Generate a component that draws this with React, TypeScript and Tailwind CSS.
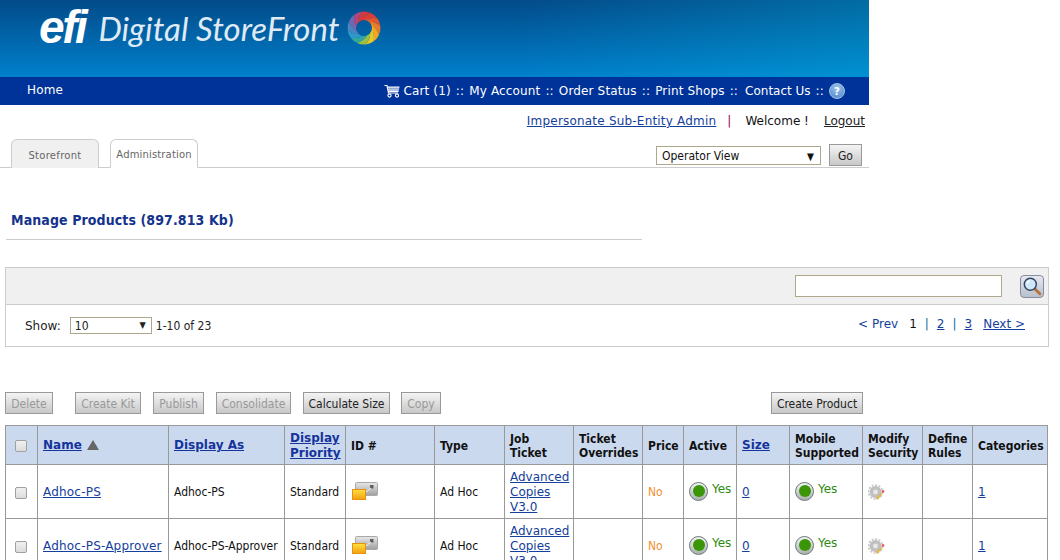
import React from "react";

const FONT = "font-['DejaVu_Sans',Verdana,sans-serif]";
const COND = "font-['DejaVu_Sans_Condensed','DejaVu_Sans',sans-serif]";

function Cart() {
  return (
    <svg width="16" height="14" viewBox="0 0 16 14" className="mr-[-2px]">
      <path d="M0.5 1.5H3L4.5 9H14" fill="none" stroke="#fff" strokeWidth="1.2" />
      <path d="M3.5 2.5H15.5L14.5 8H4.5Z" fill="#fff" />
      <path d="M4 4.2H15M4.5 6H15" stroke="#003399" strokeWidth="0.6" />
      <circle cx="5.5" cy="11.5" r="1.6" fill="none" stroke="#fff" strokeWidth="1.1" />
      <circle cx="13" cy="11.5" r="1.6" fill="none" stroke="#fff" strokeWidth="1.1" />
    </svg>
  );
}

function Ring() {
  const segs: [string, number][] = [
    ["#b04880", -90], ["#d23a40", -60], ["#dc3c34", -30], ["#e2542e", 0], ["#ea7a28", 30], ["#f0a822", 60],
    ["#e8c828", 90], ["#9cc040", 120], ["#30a8a0", 150], ["#3098c8", 180], ["#4c84c0", 210], ["#7068b0", 240],
  ];
  return (
    <svg width="34" height="34" viewBox="-17 -17 34 34" className="ml-[8px]">
      {segs.map(([c, a]) => (
        <path
          key={a}
          d="M0 -8Q8 -11 13.5 -9.46A16.5 16.5 0 0 1 16.4 -1.44Q12 -6 5.14 -6.13A8 8 0 0 0 0 -8Z"
          fill={c}
          transform={`rotate(${a})`}
        />
      ))}
    </svg>
  );
}

function Help() {
  return (
    <span className="inline-flex h-[16px] w-[16px] items-center justify-center rounded-full border border-[#a8c4e8] bg-[radial-gradient(circle_at_50%_30%,#9cc4ec,#4a84c8)] text-[10px] font-bold text-white">?</span>
  );
}

function Magnifier() {
  return (
    <div className="flex h-[23px] w-[24px] items-center justify-center rounded-[4px] border border-[#8a8aa0] bg-[linear-gradient(#e4e8f0,#b8c0cc)]">
      <svg width="20" height="20" viewBox="0 0 18 18">
        <path d="M10.5 10.5L16 16" stroke="#b8723c" strokeWidth="2.6" strokeLinecap="round" />
        <circle cx="7.5" cy="7.5" r="5.4" fill="#cfe6fb" stroke="#34465c" strokeWidth="1.3" />
        <path d="M4.5 7A3 3 0 0 1 7 4.5" fill="none" stroke="#fff" strokeWidth="1.2" />
      </svg>
    </div>
  );
}

function Folder({ id }: { id: string }) {
  return (
    <svg width="26" height="18" viewBox="0 0 26 18" className="mb-[3px]">
      <defs>
        <linearGradient id={"gr" + id} x1="0" y1="0" x2="0" y2="1"><stop offset="0" stopColor="#e8e8e8" /><stop offset="1" stopColor="#a0a0a0" /></linearGradient>
        <linearGradient id={"ye" + id} x1="0" y1="0" x2="0" y2="1"><stop offset="0" stopColor="#ffe040" /><stop offset="1" stopColor="#f0a010" /></linearGradient>
      </defs>
      <rect x="3.5" y="0.5" width="22" height="13" rx="1" fill={`url(#gr${id})`} stroke="#a8a8a8" />
      <rect x="18" y="3" width="3.5" height="3.5" fill="#606060" />
      <path d="M14 10L19 6" stroke="#f0f0f0" strokeWidth="1" />
      <rect x="0.5" y="7.5" width="13" height="10" fill={`url(#ye${id})`} stroke="#e89010" />
    </svg>
  );
}

function Dot() {
  return (
    <span className="flex h-[19px] w-[19px] shrink-0 items-center justify-center rounded-full border border-[#707878] bg-[linear-gradient(#f0f4f4,#a8b0b0)]">
      <span className="h-[12px] w-[12px] rounded-full bg-[#3a9606]" />
    </span>
  );
}

function YesCell() {
  return (
    <div className="mb-[3px] flex items-start gap-[4px] text-[#2f8a10]">
      <Dot />
      <span className={"leading-[14px]"}>Yes</span>
    </div>
  );
}

function Gear() {
  return (
    <svg width="17" height="17" viewBox="0 0 17 17" className="mb-[1px]">
      <circle cx="7.5" cy="8" r="6" fill="#c0c0c0" />
      <circle cx="7.5" cy="8" r="7" fill="none" stroke="#c4c4c4" strokeWidth="1.6" strokeDasharray="2 1.6" />
      <circle cx="7.5" cy="8" r="2.4" fill="#e8e8e8" />
      <path d="M8.5 15L13.5 10" stroke="#e0b840" strokeWidth="2" />
      <circle cx="15" cy="7.5" r="1.4" fill="#e86060" />
    </svg>
  );
}

function Check() {
  return <span className="block h-[12px] w-[12px] rounded-[2px] border border-[#a0a0a0] bg-[linear-gradient(#f0f0f0,#dcdcdc)]" />;
}

function Btn({ children, off, className = "" }: { children: React.ReactNode; off?: boolean; className?: string }) {
  return (
    <span className={`flex h-[22px] items-center justify-center border border-[#999] bg-[linear-gradient(#f4f4f4,#c8c8c8)] pt-[2px] text-[12px] ${COND} ${off ? "text-[#999]" : "text-[#222]"} ${className}`}>
      {children}
    </span>
  );
}

const L = "text-[#14409c] underline";
const H = `border border-[#999] px-[5px] pt-[2px] text-left align-middle text-[12px] font-bold leading-[14px] text-[#111] ${COND}`;
const HL = `text-[12px] text-[#14339c] underline ${FONT}`;
const C = "border border-[#999] px-[5px] pt-[2px] align-middle text-[12px] leading-[15px] text-[#111]";

function Row({ name, id }: { name: string; id: string }) {
  return (
    <tr className="h-[54px]">
      <td className={C + " pl-[9px]"}><Check /></td>
      <td className={C}><a className={L + " tracking-[0.2px]"}>{name}</a></td>
      <td className={C + " " + COND}>{name}</td>
      <td className={C + " " + COND}>Standard</td>
      <td className={C + " pl-[6px]"}><Folder id={id} /></td>
      <td className={C + " " + COND}>Ad Hoc</td>
      <td className={C}><a className={L}>Advanced Copies V3.0</a></td>
      <td className={C}></td>
      <td className={C + " text-[#f09030] " + COND}>No</td>
      <td className={C}><YesCell /></td>
      <td className={C}><a className={L}>0</a></td>
      <td className={C}><YesCell /></td>
      <td className={C}><Gear /></td>
      <td className={C}></td>
      <td className={C}><a className={L}>1</a></td>
    </tr>
  );
}

const widths = [32, 131, 116, 61, 89, 70, 69, 69, 41, 53, 53, 73, 60, 50, 75];

export default function App() {
  return (
    <div className={`h-[560px] w-[1060px] overflow-hidden bg-white ${FONT}`}>
      <div className="w-[869px]">
        <div className="flex h-[77px] items-start bg-[linear-gradient(90deg,rgba(0,40,130,0)_0%,rgba(0,0,0,0)_60%,rgba(0,190,230,0.28)_100%),linear-gradient(#034b89,#0080cc)] pl-[39px] pt-[11px]">
          <span className="font-['Liberation_Sans',sans-serif] text-[46px] font-bold italic leading-[32px] tracking-[-2.4px] text-white">efi</span>
          <span className="-mt-[1px] ml-[13px] font-['Lato',sans-serif] text-[33px] italic leading-[36px] text-[#dfeaf5]">Digital StoreFront</span>
          <Ring />
        </div>
        <div className="flex h-[28px] items-center justify-between bg-[#003399] pl-[27px] pr-[24px] text-[12px] font-medium tracking-[0.15px] text-white">
          <span className="pb-[2px]">Home</span>
          <div className="flex items-center gap-[5px]">
            <Cart />
            <span>Cart (1)</span><span>::</span><span>My Account</span><span>::</span><span>Order Status</span><span>::</span>
            <span>Print Shops</span><span>::</span><span className="ml-[2px] tracking-normal">Contact Us</span><span>::</span><Help />
          </div>
        </div>
        <div className="relative h-[63px] border-b border-[#ccc]">
          <div className="flex justify-end gap-[14px] pr-[4px] pt-[9px] text-[12px] leading-[15px]">
            <a className={L + " tracking-[0.2px]"}>Impersonate Sub-Entity Admin</a>
            <span className="-ml-[3px] text-[#900050]">|</span>
            <span className="text-[#111]">Welcome !</span>
            <a className="ml-[1px] text-[#222] underline">Logout</a>
          </div>
          <div className="absolute bottom-[-1px] left-[11px] flex gap-[11px] text-[10px] text-[#666]">
            <span className="flex h-[29px] w-[88px] items-center justify-center rounded-t-[6px] border border-b-0 border-[#ccc] bg-[#f0f0f0] pt-[2px] tracking-[0.3px]">Storefront</span>
            <span className="flex h-[29px] w-[88px] items-center justify-center rounded-t-[6px] border border-[#ccc] border-b-white bg-white pt-[2px] tracking-[0.15px]">Administration</span>
          </div>
          <div className="absolute bottom-[1px] right-[7px] flex items-center gap-[8px]">
            <span className={`flex h-[19px] w-[165px] items-center justify-between border border-[#aea78c] pl-[5px] pr-[6px] pt-[2px] text-[12px] text-[#111] ${COND}`}>
              Operator View<span className="text-[10px]">▼</span>
            </span>
            <Btn className="w-[33px]">Go</Btn>
          </div>
        </div>
      </div>

      <div className={`ml-[6px] mt-[43px] w-[636px] border-b border-[#ccc] pb-[9px] pl-[5px] text-[14px] font-bold leading-[19px] tracking-[0.1px] text-[#14338c] ${COND}`}>
        Manage Products (897.813 Kb)
      </div>

      <div className="ml-[5px] mt-[27px] w-[1044px]">
        <div className="flex h-[38px] items-center justify-end border border-[#ccc] bg-[#f0f0f0] pr-[4px]">
          <span className="mr-[18px] h-[22px] w-[207px] border border-[#aea78c] bg-white" />
          <Magnifier />
        </div>
        <div className="flex h-[42px] items-center justify-between border border-t-0 border-[#ccc] pl-[19px] pr-[23px] text-[12px] text-[#222]">
          <div className="flex items-center">
            <span>Show:</span>
            <span className={`ml-[9px] flex h-[17px] w-[82px] items-center justify-between border border-[#aea78c] pl-[4px] pr-[5px] ${COND}`}>10<span className="text-[9px]">▼</span></span>
            <span className={`ml-[4px] ${COND}`}>1-10 of 23</span>
          </div>
          <div className="flex items-center gap-[8px] pb-[4px] text-[#14409c]">
            <span>&lt; Prev</span>
            <span className="ml-[3px] text-[#111]">1</span>
            <span className="text-[#0a6aa8]">|</span><a className="underline">2</a><span className="text-[#0a6aa8]">|</span><a className="underline">3</a>
            <a className="ml-[3px] underline">Next &gt;</a>
          </div>
        </div>

        <div className="mt-[45px] flex w-[858px] gap-[12px]">
          <Btn off className="w-[48px]">Delete</Btn>
          <Btn off className="ml-[10px] w-[66px]">Create Kit</Btn>
          <Btn off className="w-[51px]">Publish</Btn>
          <Btn off className="w-[75px]">Consolidate</Btn>
          <Btn className="w-[87px]">Calculate Size</Btn>
          <Btn off className="-ml-[1px] w-[40px]">Copy</Btn>
          <Btn className="ml-auto w-[92px]">Create Product</Btn>
        </div>

        <table className="mt-[11px] w-[1043px] table-fixed border-collapse">
          <colgroup>{widths.map((w, i) => <col key={i} style={{ width: w }} />)}</colgroup>
          <thead>
            <tr className="h-[39px] bg-[#cbd9ef]">
              <th className={H + " pl-[9px]"}><Check /></th>
              <th className={H + " pb-[2px] pt-0"}><span className="flex items-center gap-[5px]"><a className={HL}>Name</a><span className="border-x-[6px] border-b-[10px] border-x-transparent border-b-[#666]" /></span></th>
              <th className={H + " pb-[2px] pt-0"}><a className={HL}>Display As</a></th>
              <th className={H + " pt-0 leading-[15px]"}><a className={HL}>Display Priority</a></th>
              <th className={H}>ID #</th>
              <th className={H}>Type</th>
              <th className={H}>Job Ticket</th>
              <th className={H}>Ticket Overrides</th>
              <th className={H}>Price</th>
              <th className={H}>Active</th>
              <th className={H + " pb-[2px] pt-0"}><a className={HL}>Size</a></th>
              <th className={H}>Mobile Supported</th>
              <th className={H}>Modify Security</th>
              <th className={H}>Define Rules</th>
              <th className={H}>Categories</th>
            </tr>
          </thead>
          <tbody>
            <Row name="Adhoc-PS" id="a" />
            <Row name="Adhoc-PS-Approver" id="b" />
          </tbody>
        </table>
      </div>
    </div>
  );
}
